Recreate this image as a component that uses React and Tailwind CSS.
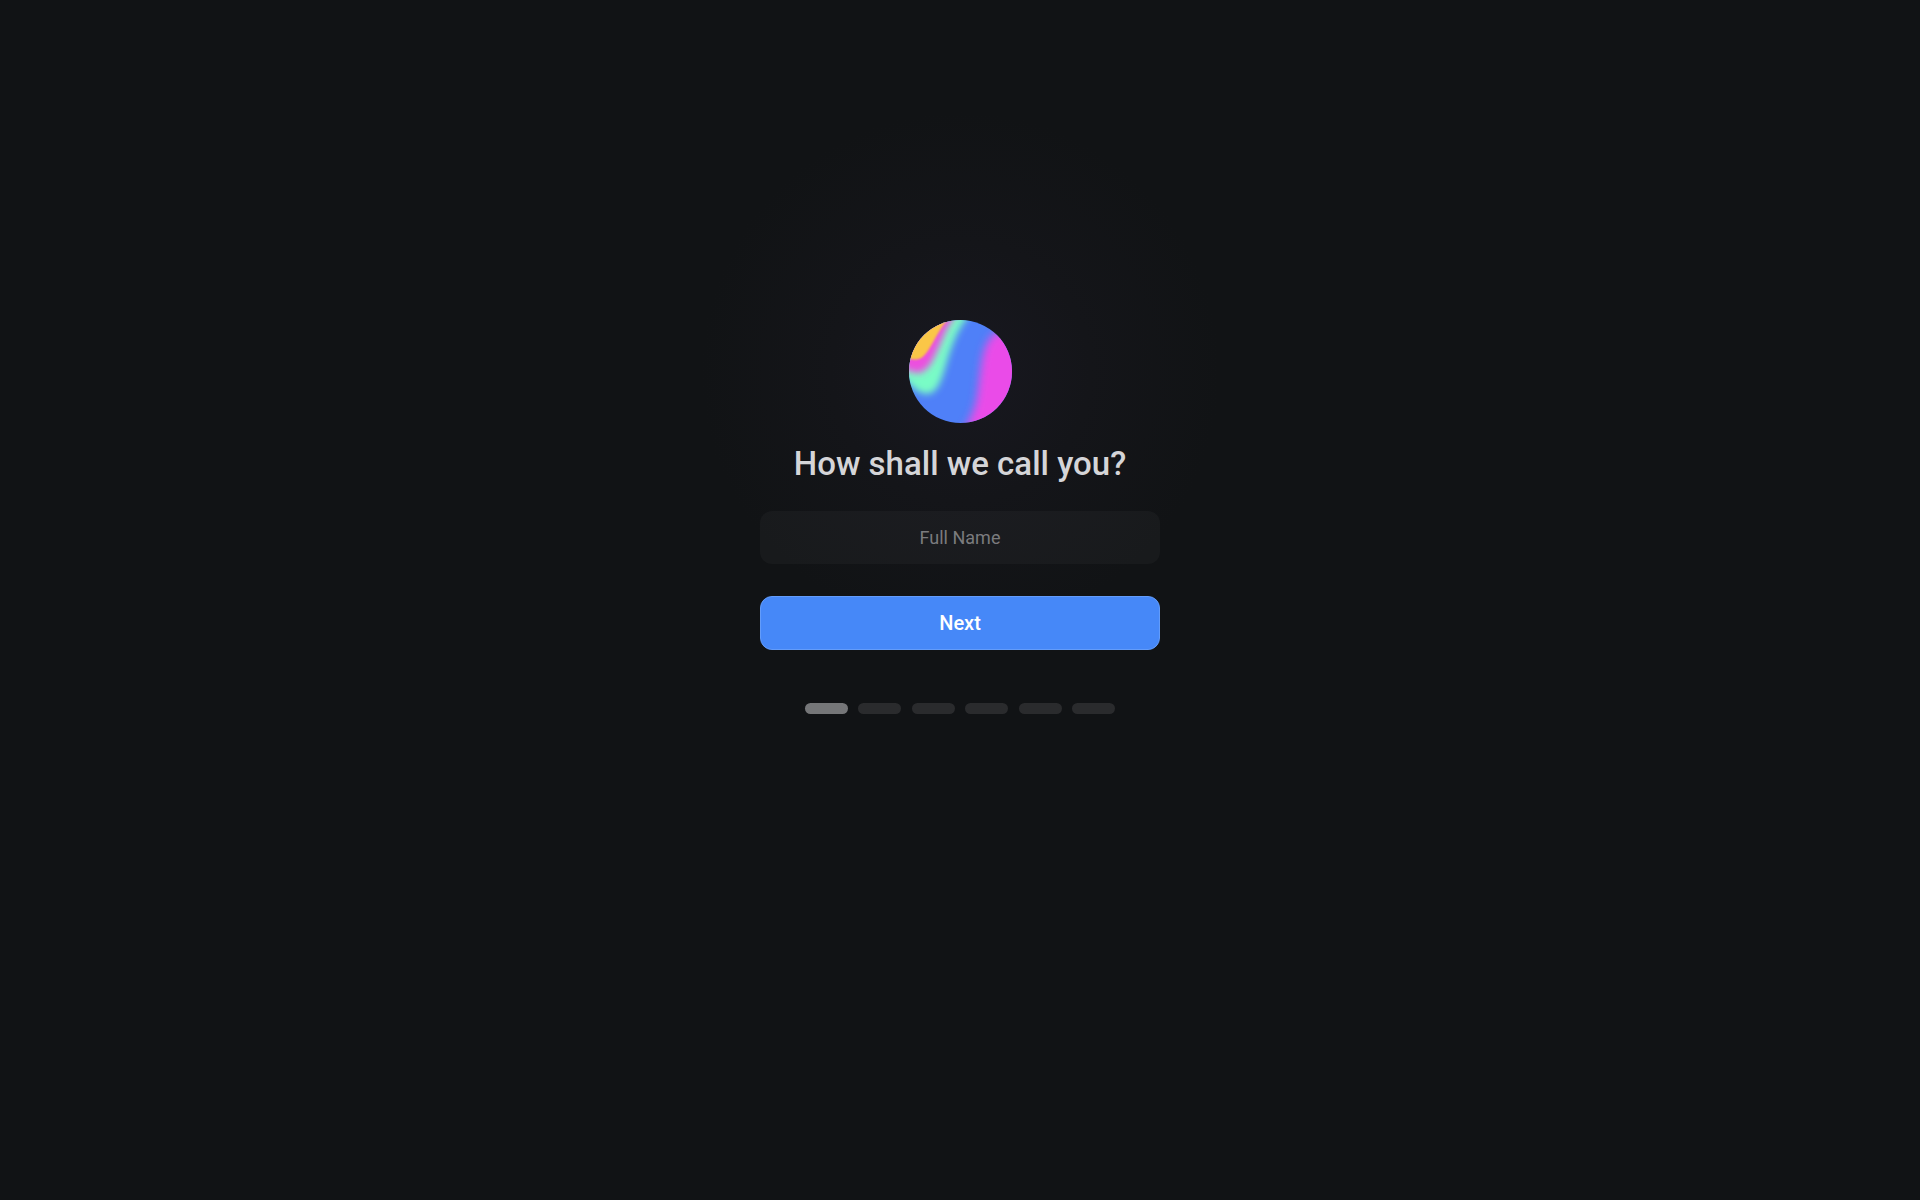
import { useState } from 'react'

const STEPS = ['Name', 'Workspace', 'Role', 'Team', 'Theme', 'Finish']

function Orb() {
  return (
    <svg viewBox="0 0 310 310" className="relative size-[103px]" aria-hidden="true">
      <defs>
        <clipPath id="orb-clip">
          <circle cx="155" cy="155" r="155" />
        </clipPath>
        <filter id="blur-lg" x="-50%" y="-50%" width="200%" height="200%">
          <feGaussianBlur stdDeviation="13" />
        </filter>
        <filter id="blur-md" x="-50%" y="-50%" width="200%" height="200%">
          <feGaussianBlur stdDeviation="11" />
        </filter>
        <filter id="blur-sm" x="-50%" y="-50%" width="200%" height="200%">
          <feGaussianBlur stdDeviation="3" />
        </filter>
      </defs>
      <g clipPath="url(#orb-clip)">
        <rect width="310" height="310" fill="#4f80f8" />
        <path
          d="M380 20 L272 32 C240 46 228 80 221 112 C214 150 211 190 204 235 C198 268 185 295 170 325 L162 380 L380 380 Z"
          fill="#ea4be8"
          filter="url(#blur-lg)"
        />
        <path
          d="M-60 -60 L200 -60 L178 -10 C150 22 136 60 123 96 C112 130 104 166 90 194 C77 220 56 230 32 217 C10 205 -4 186 -18 176 L-60 168 Z"
          fill="#79fcc6"
          filter="url(#blur-md)"
        />
        <path
          d="M-60 -60 L154 -60 L134 -5 C116 20 106 45 94 72 C82 100 72 124 57 142 C40 162 18 164 0 152 L-60 134 Z"
          fill="#ec4fdf"
          filter="url(#blur-md)"
        />
        <path
          d="M-60 -60 L140 -60 L115 0 C98 20 86 42 74 64 C62 86 52 102 41 111 C30 120 14 121 2 117 L-60 106 Z"
          fill="#fac646"
          filter="url(#blur-sm)"
        />
      </g>
    </svg>
  )
}

export default function App() {
  const [name, setName] = useState('')
  const [step, setStep] = useState(0)

  const handleSubmit = (e) => {
    e.preventDefault()
    setStep((s) => Math.min(s + 1, STEPS.length - 1))
  }

  return (
    <main className="min-h-screen flex flex-col items-center overflow-hidden bg-[#111315] px-6 pt-80 pb-16 font-['Roboto',sans-serif]">
      <div className="relative">
        {/* soft glow behind the orb */}
        <div className="absolute -inset-52 rounded-full bg-[radial-gradient(closest-side,#181820,#141519_50%,#111315)]" />
        <Orb />
      </div>

      <form onSubmit={handleSubmit} className="relative flex w-full max-w-[400px] flex-col items-center">
        <h1 className="mt-5 text-center text-[33px] leading-[42px] font-medium text-[#d5d5d8]">
          How shall we call you?
        </h1>
        <input
          type="text"
          aria-label="Full Name"
          placeholder="Full Name"
          value={name}
          onChange={(e) => setName(e.target.value)}
          className="mt-[26px] h-[53px] w-full rounded-xl bg-white/3 px-4 text-center text-[18px] text-white outline-none placeholder:text-[#7b7b7e]"
        />
        <button
          type="submit"
          className="mt-8 h-[54px] w-full cursor-pointer rounded-xl border border-[#639cfa] bg-[#4688f8] text-[20px] font-medium text-white"
        >
          Next
        </button>
      </form>

      <ol className="mt-[53px] flex w-full max-w-[310px] justify-between">
        {STEPS.map((label, i) => (
          <li
            key={label}
            aria-label={label}
            className={`h-[11px] w-[43px] rounded-full ${i === step ? 'bg-[#757678]' : 'bg-[#2a2b2d]'}`}
          />
        ))}
      </ol>
    </main>
  )
}
